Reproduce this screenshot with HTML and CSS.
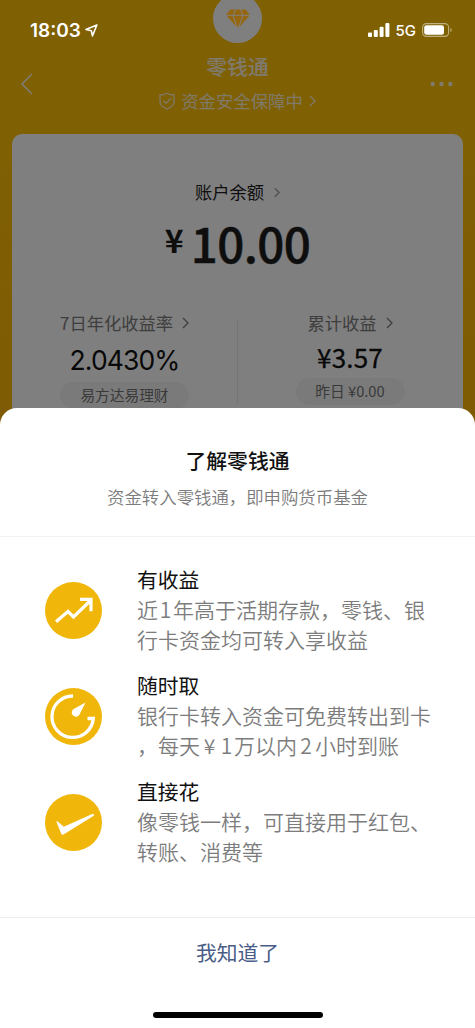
FILE: index.html
```html
<!DOCTYPE html>
<html lang="zh-CN">
<head>
<meta charset="utf-8">
<meta name="viewport" content="width=device-width, initial-scale=1">
<title>零钱通</title>
<link rel="stylesheet" href="styles.css">
</head>
<body>
<div class="phone">
  <main class="screen">
    <header class="header">
      <div class="logo">
        <svg class="gem" width="26" height="21" viewBox="0 0 26 21"><path d="M5.500 1.500h15L25 7 13 20.500 1 7z" fill="#94660f"/><path d="M1 7.300h24M8 7.300l5 14 5-14M8.300 7.300L10.500 1M17.700 7.300L15.500 1" fill="none" stroke="#828080" stroke-width="1"/></svg>
      </div>
      <div class="brand">零钱通</div>
      <div class="safety">
        <svg width="16" height="18" viewBox="0 0 16 18" fill="none" stroke="currentColor" stroke-width="1.3"><path d="M8 1.2C10 2.5 12.500 3 15 3v6.500c0 3.500-3 6-7 7.500-4-1.500-7-4-7-7.500V3c2.500 0 5-.5 7-1.800z"/><path d="M4.600 8.800l2.500 2.500 5-5"/></svg>
        <span>资金安全保障中</span>
        <svg class="safety-arrow" width="7" height="12" viewBox="0 0 7 12" fill="none" stroke="currentColor" stroke-width="1.4"><path d="M1 1l5 5-5 5"/></svg>
      </div>
      <svg class="back" width="13" height="22" viewBox="0 0 13 22" fill="none" stroke="currentColor" stroke-width="1.7"><path d="M12 1L2 11l10 10"/></svg>
      <svg class="more" width="23" height="6" viewBox="0 0 23 6" fill="currentColor"><circle cx="2.700" cy="3" r="2.200"/><circle cx="11.500" cy="3" r="2.200"/><circle cx="20.300" cy="3" r="2.200"/></svg>
    </header>
    <section class="card">
      <div class="balance-label">账户余额<svg width="6" height="11" viewBox="0 0 7 12" fill="none" stroke="#a0a0a0" stroke-width="1.5"><path d="M1 1l5 5-5 5"/></svg></div>
      <div class="balance"><span class="yen">¥</span><span class="amount">10.00</span></div>
      <div class="stats">
        <div class="stat">
          <div class="stat-label">7日年化收益率<svg width="7" height="12" viewBox="0 0 7 12" fill="none" stroke="currentColor" stroke-width="1.3"><path d="M1 1l5 5-5 5"/></svg></div>
          <div class="stat-value rate">2.0430%</div>
          <div class="pill fund">易方达易理财</div>
        </div>
        <div class="stat stat-right">
          <div class="stat-label">累计收益<svg width="7" height="12" viewBox="0 0 7 12" fill="none" stroke="currentColor" stroke-width="1.3"><path d="M1 1l5 5-5 5"/></svg></div>
          <div class="stat-value earned">¥3.57</div>
          <div class="pill yesterday">昨日 ¥0.00</div>
        </div>
      </div>
    </section>
  </main>
  <div class="mask"></div>
  <div class="status">
    <div class="clock">18:03<svg width="13" height="13" viewBox="0 0 14 14" fill="none" stroke="#fff" stroke-width="1.700" stroke-linejoin="round"><path d="M12.800 1.100L1 6l5.800 1.200L8 12.800z"/></svg></div>
    <div class="signals">
      <svg width="22" height="14" viewBox="0 0 22 14" fill="#fff"><rect x="0" y="9.500" width="4" height="4.500" rx="1"/><rect x="5.800" y="7" width="4" height="7" rx="1"/><rect x="11.600" y="3.800" width="4" height="10.200" rx="1"/><rect x="17.400" y="0" width="4" height="14" rx="1"/></svg>
      <span class="network">5G</span>
      <svg width="31" height="14" viewBox="0 0 31 14"><rect x=".6" y=".6" width="26" height="12.800" rx="3.800" fill="none" stroke="#fff" stroke-opacity=".5" stroke-width="1.100"/><rect x="2.200" y="2.200" width="19.800" height="9.600" rx="2.300" fill="#fff"/><path d="M28.500 5v4c1.500-.5 1.500-3.500 0-4z" fill="#fff" fill-opacity=".6"/></svg>
    </div>
  </div>
  <section class="sheet">
    <div class="sheet-head">
      <h1 class="sheet-title">了解零钱通</h1>
      <p class="sheet-subtitle">资金转入零钱通，即申购货币基金</p>
    </div>
    <div class="features">
      <article class="feature">
        <svg class="feature-icon" viewBox="0 0 57 57"><circle cx="28.500" cy="28.500" r="28.500" fill="#f0b70a"/><path d="M11 39.800L23 29.500l5.500 5.500L45.500 18.500M35 17.300H46v12" fill="none" stroke="#fff" stroke-width="3.200"/></svg>
        <div class="feature-body"><h2>有收益</h2><p>近<span class="digit">1</span>年高于活期存款，零钱、银<br>行卡资金均可转入享收益</p></div>
      </article>
      <article class="feature">
        <svg class="feature-icon" viewBox="0 0 57 57"><circle cx="28.500" cy="28.500" r="28.500" fill="#f0b70a"/><path d="M28 8A20.700 20.700 0 1 0 48.300 30.500H42.500" fill="none" stroke="#fff" stroke-width="3.300"/><path d="M40.500 14.500L29.500 20.500A4.200 4.200 0 1 0 35 25.500z" fill="#fff"/></svg>
        <div class="feature-body"><h2>随时取</h2><p>银行卡转入资金可免费转出到卡<br>，每天<span class="money">¥</span><span class="digit">1</span>万以内<span class="digit two">2</span>小时到账</p></div>
      </article>
      <article class="feature">
        <svg class="feature-icon" viewBox="0 0 57 57"><circle cx="28.500" cy="28.500" r="28.500" fill="#f0b70a"/><path d="M11.300 27.600Q12 26.700 13 27.700l5.800 5L47.800 19.700Q49.500 19.700 48.800 21.700L18.500 40.500Q17 41 16.300 40z" fill="#fff"/></svg>
        <div class="feature-body"><h2>直接花</h2><p>像零钱一样，可直接用于红包、<br>转账、消费等</p></div>
      </article>
    </div>
    <button class="confirm" type="button">我知道了</button>
    <div class="home-bar"></div>
  </section>
</div>
</body>
</html>
```
FILE: styles.css
```css
* { box-sizing: border-box; }

body {
  margin: 0;
  font-family: "Noto Sans CJK SC", sans-serif;
}

h1, h2, p { margin: 0; font-weight: 400; }
svg { display: block; flex: none; }

.phone {
  position: relative;
  width: 475px;
  height: 1028px;
  overflow: hidden;
  background: #fff;
}

.screen {
  height: 440px;
  padding: 0 12px;
  background: linear-gradient(#ffc106 0, #ffc106 130px, #fcb609 440px);
}

.header {
  position: relative;
  height: 134px;
  display: flex;
  flex-direction: column;
  align-items: center;
  color: #fff;
}

.logo {
  width: 49px;
  height: 49px;
  margin-top: -6px;
  border-radius: 50%;
  background: #fff;
  display: flex;
  align-items: center;
  justify-content: center;
}

/* The gem keeps its own tone above the mask. */
.gem { position: relative; z-index: 1; }

.brand {
  margin-top: 7px;
  font-size: 20.8px;
  line-height: 32px;
  font-weight: 500;
  opacity: .85;
}

.safety {
  display: flex;
  align-items: center;
  gap: 6px;
  margin-top: 6px;
  font-size: 17.4px;
  line-height: 26px;
  opacity: .8;
}

.back, .more { position: absolute; opacity: .85; }
.back { left: 8px; top: 73px; }
.more { right: 10px; top: 81px; }

.card {
  height: 306px;
  padding-top: 44px;
  border-radius: 10px;
  background: #fff;
}

.balance-label {
  display: flex;
  align-items: center;
  justify-content: center;
  gap: 10px;
  font-size: 17.3px;
  line-height: 28px;
  color: #1c1c1c;
}

.balance {
  display: flex;
  justify-content: center;
  align-items: flex-start;
  gap: 7px;
  height: 77px;
  color: #1c1c1c;
}

.yen { font-size: 32px; line-height: 66px; font-weight: 700; }
.amount {
  font-size: 47.5px;
  line-height: 74px;
  font-weight: 500;
  letter-spacing: -.6px;
  -webkit-text-stroke: .5px #1c1c1c;
}

.stats { display: flex; margin-top: 36px; }

.stat {
  width: 225px;
  height: 85px;
  display: flex;
  flex-direction: column;
  align-items: center;
}

.stat-right { border-left: 1px solid #ebebeb; }

.stat-label {
  display: flex;
  align-items: center;
  gap: 9px;
  font-size: 17.3px;
  line-height: 26px;
  margin-top: -9px;
  color: #7c7c7c;
}

.stat-value { flex: none; color: #101010; }
.rate { font: 400 26.500px/40px Inter, sans-serif; letter-spacing: -.9px; margin-top: 4px; }
.earned {
  font-size: 26px;
  line-height: 40px;
  font-weight: 400;
  letter-spacing: .2px;
  -webkit-text-stroke: .3px #101010;
  margin-top: 1px;
}

.pill {
  flex: none;
  border-radius: 14px;
  height: 27px;
  line-height: 26px;
  text-align: center;
  font-size: 14.700px;
  color: #747474;
  background: #f5f5f5;
}

.fund { width: 129px; margin-top: 2px; }
.yesterday { width: 109px; margin-top: 1px; }

.mask {
  position: absolute;
  inset: 0;
  background: rgba(0, 0, 0, .5);
}

.status {
  position: absolute;
  inset: 0 0 auto;
  height: 60px;
  padding: 0 22px 0 30px;
  display: flex;
  align-items: center;
  justify-content: space-between;
  color: #fff;
  font-family: Inter, sans-serif;
}

.clock {
  display: flex;
  align-items: center;
  gap: 4px;
  font-size: 19px;
  font-weight: 600;
}

.signals { display: flex; align-items: center; gap: 6px; }
.network { font-size: 15px; font-weight: 500; }

.sheet {
  position: absolute;
  inset: 408px 0 0;
  display: flex;
  flex-direction: column;
  align-items: center;
  background: #fff;
  border-radius: 17px 17px 0 0;
}

.sheet-head {
  width: 100%;
  height: 129px;
  padding-top: 36px;
  text-align: center;
  border-bottom: 1px solid #f3f3f3;
}

.sheet-title {
  font-size: 20.8px;
  line-height: 32px;
  font-weight: 500;
  color: #111;
}

.sheet-subtitle {
  margin-top: 8px;
  font-size: 17.4px;
  line-height: 26px;
  font-weight: 350;
  color: #7c7c7c;
}

.features {
  width: 100%;
  height: 381px;
  padding: 27px 0 0 45px;
  border-bottom: 1px solid #ededed;
}

.feature {
  height: 106px;
  display: flex;
  gap: 35px;
}

.feature-icon { width: 57px; height: 57px; margin-top: 17.5px; }

.feature-body {
  font-size: 21px;
  line-height: 30px;
  white-space: nowrap;
}

.feature-body h2 { font-size: 20.8px; color: #111; }
.feature-body p { color: #7c7c7c; font-weight: 350; }
.digit { display: inline-block; width: 15px; text-align: center; }
.two { width: 18px; }
.money { display: inline-block; width: 19px; text-align: center; }

.confirm {
  height: 68px;
  border: 0;
  padding: 0;
  background: none;
  font: 400 20.800px/68px "Noto Sans CJK SC", sans-serif;
  color: #4a5c88;
}

.home-bar {
  width: 170px;
  height: 6px;
  margin-top: 26px;
  border-radius: 3px;
  background: #000;
}
```
